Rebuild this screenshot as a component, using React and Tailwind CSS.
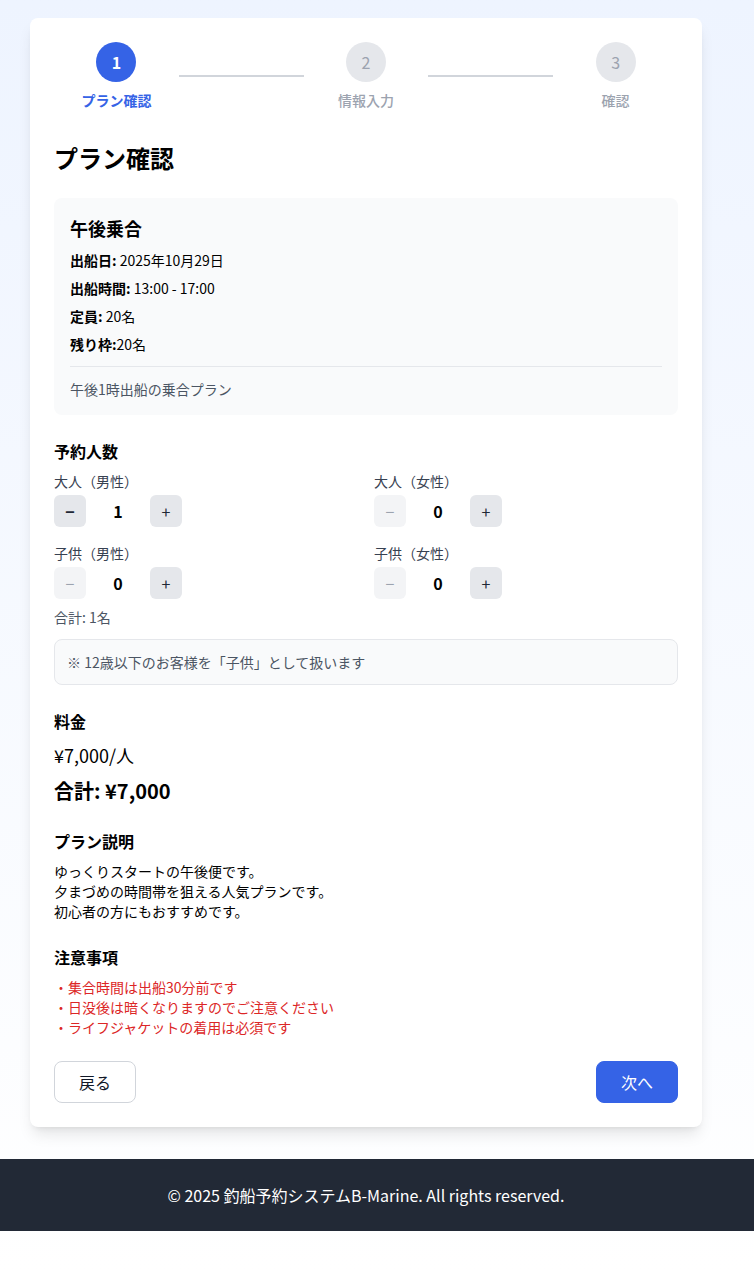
import React, { useState } from "react";

const font = { fontFamily: '"Noto Sans CJK JP", "Noto Sans", sans-serif' };

const steps = ["プラン確認", "情報入力", "確認"];

const Stepper = ({ current }) => {
  const items = [];
  steps.forEach((label, i) => {
    const active = i + 1 === current;
    items.push(
      <div key={label} className="flex-1 flex flex-col items-center">
        <div
          className={
            active
              ? "w-10 h-10 rounded-full bg-[#3563e6] text-white font-bold flex items-center justify-center"
              : "w-10 h-10 rounded-full bg-[#e5e7eb] text-[#9ca3af] flex items-center justify-center"
          }
        >
          {i + 1}
        </div>
        <p
          className={
            active
              ? "mt-2 text-sm font-bold text-[#3563e6]"
              : "mt-2 text-sm font-medium text-[#9ca3af]"
          }
        >
          {label}
        </p>
      </div>
    );
    if (i < steps.length - 1) {
      items.push(<div key={"line" + i} className="flex-1 h-0.5 bg-[#d1d5db]"></div>);
    }
  });
  return <div className="flex items-center">{items}</div>;
};

const Counter = ({ label, value, onChange }) => {
  const disabled = value <= 0;
  return (
    <div>
      <p className="text-sm text-[#374151]">{label}</p>
      <div className="flex items-center gap-2 mt-1">
        <button
          onClick={() => !disabled && onChange(value - 1)}
          className={
            disabled
              ? "w-8 h-8 rounded-md bg-[#f3f4f6] text-[#9ca3af] flex items-center justify-center"
              : "w-8 h-8 rounded-md bg-[#e5e7eb] text-[#1f2937] font-bold flex items-center justify-center"
          }
        >
          −
        </button>
        <span className="w-12 text-center text-base font-bold text-black">{value}</span>
        <button
          onClick={() => onChange(value + 1)}
          className="w-8 h-8 rounded-md bg-[#e5e7eb] text-[#1f2937] flex items-center justify-center"
        >
          +
        </button>
      </div>
    </div>
  );
};

const App = () => {
  const [counts, setCounts] = useState({ am: 1, af: 0, cm: 0, cf: 0 });
  const total = counts.am + counts.af + counts.cm + counts.cf;
  const price = 7000;

  const set = (key) => (v) => setCounts({ ...counts, [key]: v });

  return (
    <div style={font} className="min-h-screen bg-gradient-to-b from-[#eef4ff] to-white text-black">
      <main className="pt-[18px] pb-8 pl-[30px]">
        <div className="max-w-2xl bg-white rounded-lg shadow-lg p-6">
          <Stepper current={1} />

          <h1 className="mt-8 text-2xl font-bold">プラン確認</h1>

          {/* plan info */}
          <div className="mt-6 bg-[#f9fafb] rounded-lg p-4">
            <h2 className="text-lg font-bold mb-2">午後乗合</h2>
            <div className="flex flex-col gap-2 text-sm">
              <p>
                <span className="font-semibold">出船日:</span> 2025年10月29日
              </p>
              <p>
                <span className="font-semibold">出船時間:</span> 13:00 - 17:00
              </p>
              <p>
                <span className="font-semibold">定員:</span> 20名
              </p>
              <p>
                <span className="font-semibold">残り枠:</span>20名
              </p>
            </div>
            <div className="mt-3 pt-3 border-t border-[#e5e7eb]">
              <p className="text-sm text-[#4b5563]">午後1時出船の乗合プラン</p>
            </div>
          </div>

          {/* people */}
          <h3 className="mt-6 mb-2 font-bold">予約人数</h3>
          <div className="grid grid-cols-2 gap-4">
            <Counter label="大人（男性）" value={counts.am} onChange={set("am")} />
            <Counter label="大人（女性）" value={counts.af} onChange={set("af")} />
            <Counter label="子供（男性）" value={counts.cm} onChange={set("cm")} />
            <Counter label="子供（女性）" value={counts.cf} onChange={set("cf")} />
          </div>
          <p className="mt-2 text-sm text-[#4b5563]">合計: {total}名</p>
          <div className="mt-3 p-3 bg-[#f9fafb] border border-[#e5e7eb] rounded-lg">
            <p className="text-sm text-[#4b5563]">※ 12歳以下のお客様を「子供」として扱います</p>
          </div>

          {/* price */}
          <h3 className="mt-6 font-bold">料金</h3>
          <p className="mt-2 text-lg">¥{price.toLocaleString()}/人</p>
          <p className="mt-2 text-xl font-bold">合計: ¥{(price * total).toLocaleString()}</p>

          {/* description */}
          <h3 className="mt-6 mb-2 font-bold">プラン説明</h3>
          <p className="text-sm whitespace-pre-line">
            {"ゆっくりスタートの午後便です。\n夕まづめの時間帯を狙える人気プランです。\n初心者の方にもおすすめです。"}
          </p>

          {/* notes */}
          <h3 className="mt-6 mb-2 font-bold">注意事項</h3>
          <div className="text-sm text-[#dc2626]">
            <p>・集合時間は出船30分前です</p>
            <p>・日没後は暗くなりますのでご注意ください</p>
            <p>・ライフジャケットの着用は必須です</p>
          </div>

          <div className="mt-6 flex justify-between">
            <button className="px-6 py-2 border border-[#d1d5db] rounded-lg text-[#111827]">戻る</button>
            <button className="px-6 py-2 border border-[#3563e6] bg-[#3563e6] rounded-lg text-white">次へ</button>
          </div>
        </div>
      </main>

      <footer className="bg-[#222936] py-6 pr-[22px] text-center text-white">
        <p>© 2025 釣船予約システムB-Marine. All rights reserved.</p>
      </footer>
    </div>
  );
};

export default App;
